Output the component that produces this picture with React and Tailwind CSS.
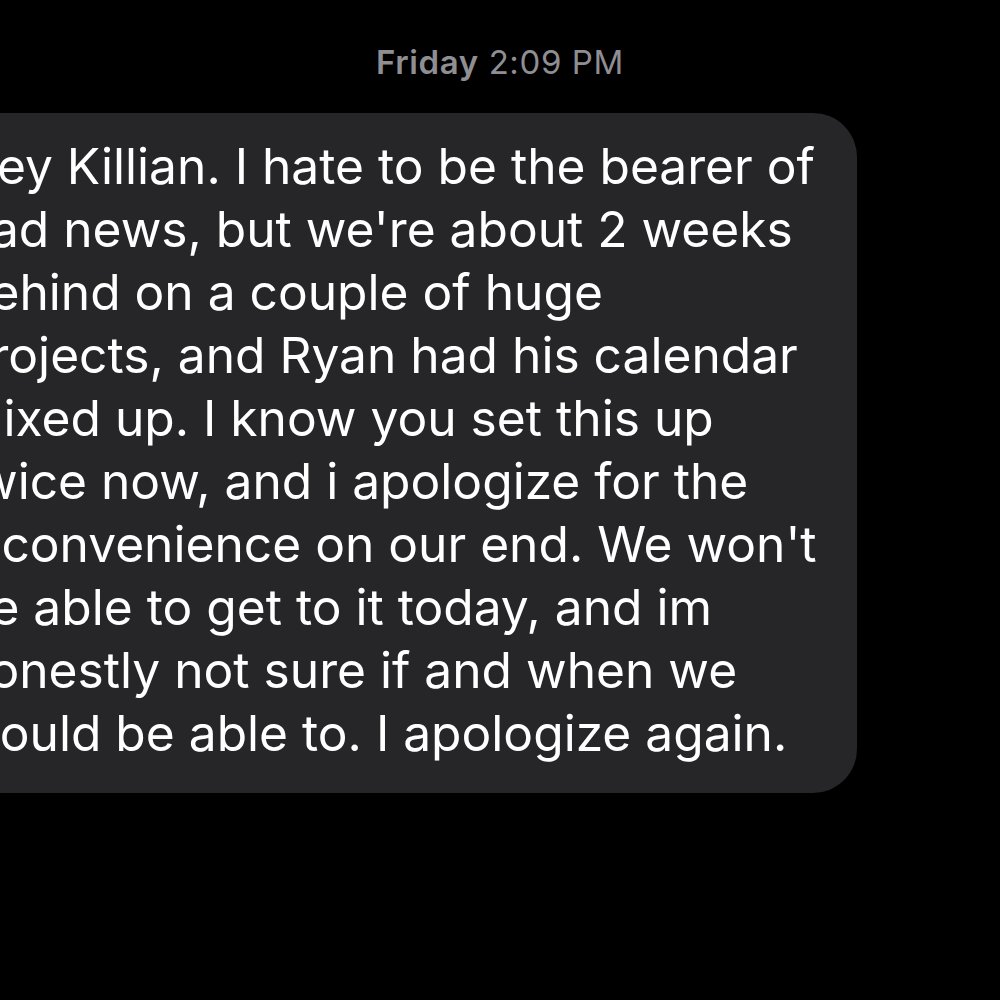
import React from "react";

const LINES = [
  "Hey Killian. I hate to be the bearer of",
  "bad news, but we're about 2 weeks",
  "behind on a couple of huge",
  "projects, and Ryan had his calendar",
  "mixed up. I know you set this up",
  "twice now, and i apologize for the",
  "inconvenience on our end. We won't",
  "be able to get to it today, and im",
  "honestly not sure if and when we",
  "would be able to. I apologize again.",
];

const App = () => {
  return (
    <div
      className="w-[1000px] h-[1000px] bg-black overflow-hidden"
      style={{ fontFamily: "Inter, 'Noto Sans', sans-serif" }}
    >
      <div className="pt-[42px] text-center text-[33px] leading-[40px] tracking-[0.6px] text-[#8e8e93]">
        <span className="font-semibold">Friday</span> 2:09 PM
      </div>

      <div className="flex mt-[31px]">
        <div className="-ml-[76px] w-[933px] shrink-0 bg-[#262629] rounded-[44px] pl-[36px] pt-[22px] pb-[28px]">
          {LINES.map((line, i) => (
            <div
              key={i}
              className="whitespace-nowrap text-white text-[49.7px] leading-[63px]"
            >
              {line}
            </div>
          ))}
        </div>
      </div>
    </div>
  );
};

export default App;
